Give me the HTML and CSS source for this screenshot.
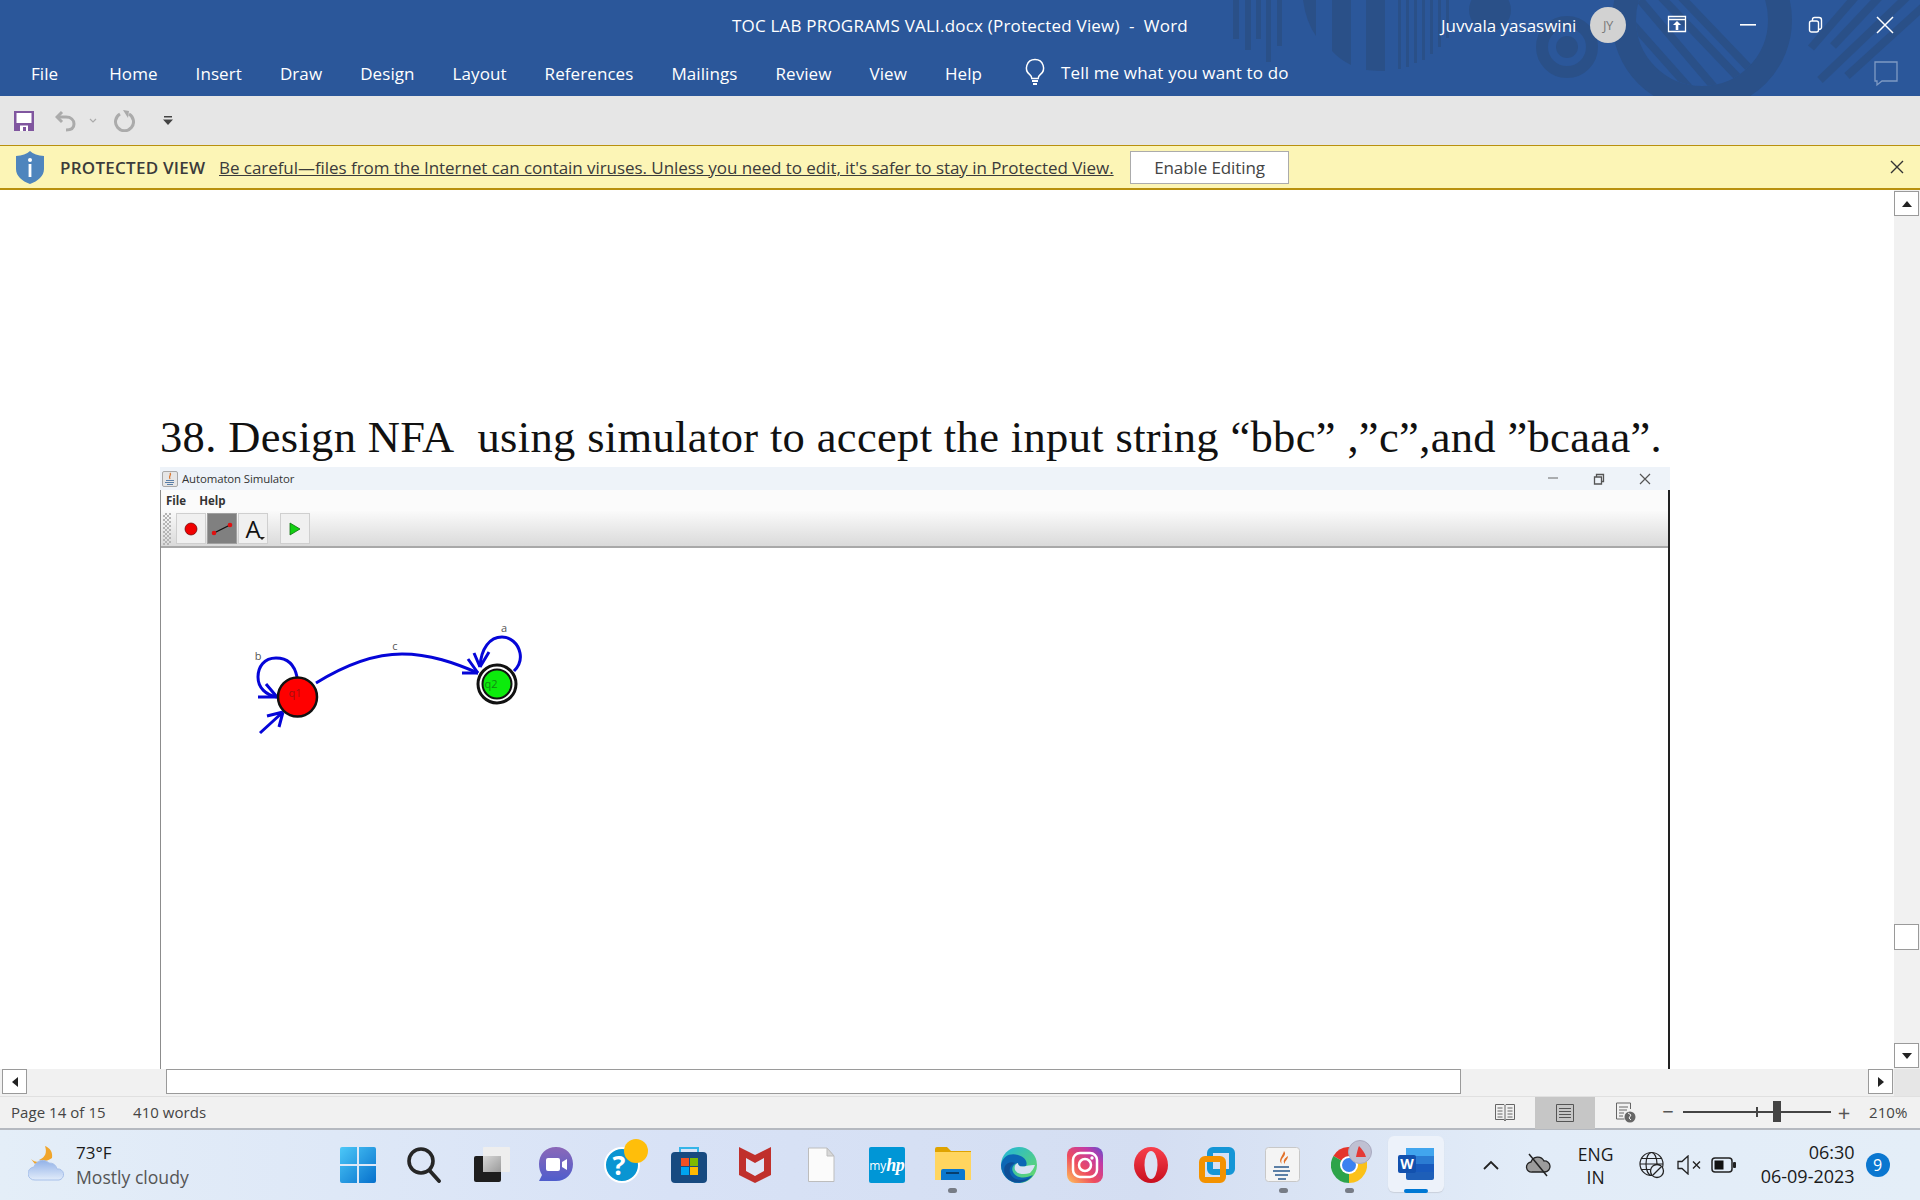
FILE: index.html
```html
<!DOCTYPE html>
<html lang="en">
<head>
<meta charset="utf-8">
<title>TOC LAB PROGRAMS VALI.docx (Protected View) - Word</title>
<link rel="stylesheet" href="styles.css">
</head>
<body>
<div class="app-window">
  <header class="ribbon">
    <svg class="ribbon-art" viewBox="0 0 1920 96" aria-hidden="true">
      <defs>
        <clipPath id="ringInner"><circle cx="1702" cy="20" r="66"/></clipPath>
      </defs>
      <g fill="#2A5088">
        <rect x="1233" y="0" width="6" height="39"/>
        <rect x="1245" y="0" width="6" height="50"/>
        <rect x="1256" y="0" width="5" height="39"/>
        <rect x="1266" y="0" width="5" height="62"/>
        <rect x="1277" y="0" width="5" height="46"/>
        <path d="M1303 0h13v36q-10-14-13-36z"/>
        <path d="M1332 0h19v65q-12-6-19-14z"/>
        <path d="M1366 0h19v71q-10 0-19-1z"/>
        <rect x="1398" y="0" width="3" height="69"/>
        <rect x="1406" y="0" width="3" height="67"/>
        <rect x="1414" y="0" width="3" height="63"/>
        <rect x="1422" y="0" width="3" height="60"/>
        <rect x="1430" y="0" width="3" height="54"/>
        <rect x="1438" y="0" width="3" height="47"/>
        <rect x="1446" y="0" width="3" height="38"/>
        <circle cx="1490" cy="10" r="21"/>
        <circle cx="1567" cy="47" r="11"/>
      </g>
      <circle cx="1567" cy="47" r="25" fill="none" stroke="#2A5088" stroke-width="12"/>
      <circle cx="1702" cy="20" r="78" fill="none" stroke="#2A5088" stroke-width="24"/>
      <g clip-path="url(#ringInner)" stroke="#2A5088" stroke-width="8">
        <line x1="1620" y1="10" x2="1700" y2="100"/>
        <line x1="1640" y1="0" x2="1725" y2="100"/>
        <line x1="1640" y1="-25" x2="1750" y2="90"/>
        <line x1="1660" y1="-25" x2="1770" y2="90"/>
      </g>
      <g stroke="#2A5088" stroke-width="8">
        <line x1="1811" y1="48" x2="1856" y2="-4"/>
        <line x1="1833" y1="46" x2="1882" y2="-6"/>
        <line x1="1820" y1="80" x2="1910" y2="-6"/>
        <line x1="1847" y1="76" x2="1924" y2="6"/>
      </g>
    </svg>
    <div class="title-row">
      <span class="doc-title">TOC LAB PROGRAMS VALI.docx (Protected View)&nbsp; -&nbsp; Word</span>
      <span class="user-name">Juvvala yasaswini</span>
      <span class="avatar">JY</span>
      <span class="win-btn win-btn-first">
        <svg width="20" height="20" viewBox="0 0 20 20"><path d="M1.500 2.500h17v15h-17zM1.500 5.500h17" fill="none" stroke="#fff" stroke-width="1.300"/><path d="M10 7l4 4h-2.700v5H8.700v-5H6z" fill="#fff"/></svg>
      </span>
      <span class="win-btn"><svg width="18" height="4" viewBox="0 0 18 4"><rect y="1" width="16" height="1.600" fill="#fff"/></svg></span>
      <span class="win-btn"><svg width="18" height="20" viewBox="0 0 18 20"><path d="M1.500 8a2 2 0 0 1 2-2h5a2 2 0 0 1 2 2v7a2 2 0 0 1-2 2h-5a2 2 0 0 1-2-2zM4.500 6V4.500a2 2 0 0 1 2-2h4.500a2.500 2.500 0 0 1 2.500 2.500v7.500a2 2 0 0 1-3 1.500" fill="none" stroke="#fff" stroke-width="1.400"/></svg></span>
      <span class="win-btn"><svg width="18" height="18" viewBox="0 0 18 18"><path d="M1 1l16 16M17 1L1 17" stroke="#fff" stroke-width="1.500"/></svg></span>
    </div>
    <nav class="tab-row">
      <span class="tab tab-file">File</span>
      <span class="tab">Home</span>
      <span class="tab">Insert</span>
      <span class="tab">Draw</span>
      <span class="tab">Design</span>
      <span class="tab">Layout</span>
      <span class="tab">References</span>
      <span class="tab">Mailings</span>
      <span class="tab">Review</span>
      <span class="tab">View</span>
      <span class="tab">Help</span>
      <span class="tell-me">
        <svg width="22" height="28" viewBox="0 0 22 28"><path d="M11 1.500a8.500 8.500 0 0 0-5 15.400c1.200 1 1.700 2.200 1.800 3.600h6.400c.1-1.400.6-2.600 1.800-3.600A8.500 8.500 0 0 0 11 1.500z" fill="none" stroke="#fff" stroke-width="1.500"/><path d="M8 23h6M9 26h4" stroke="#fff" stroke-width="1.800"/></svg>
        <span>Tell me what you want to do</span>
      </span>
      <svg class="comment-icon" width="26" height="28" viewBox="0 0 26 28"><path d="M2 3h22v19H9l-5 4v-4H2z" fill="none" stroke="#7F9AC4" stroke-width="1.300"/></svg>
    </nav>
  </header>

  <div class="quick-bar">
    <svg class="qa-save" width="20" height="20" viewBox="0 0 20 20"><path d="M0 0h20v20H0z" fill="#80569F"/><path d="M2.500 2h15v10h-15z" fill="#fff"/><path d="M6 14.500h8V20h-2v-4H9v4H6z" fill="#fff"/></svg>
    <svg class="qa-undo" width="24" height="22" viewBox="0 0 24 22"><path d="M7 2L2 7l5 5" fill="none" stroke="#ABABAB" stroke-width="3"/><path d="M3 7h8c5 0 8 3 8 7s-3 6-8 6" fill="none" stroke="#ABABAB" stroke-width="3"/></svg>
    <svg class="qa-chev" width="8" height="6" viewBox="0 0 8 6"><path d="M1 1l3 3 3-3" fill="none" stroke="#ABABAB" stroke-width="1.200"/></svg>
    <svg class="qa-redo" width="22" height="22" viewBox="0 0 22 22"><path d="M16 4a9 9 0 1 1-9 0" fill="none" stroke="#ABABAB" stroke-width="3"/><path d="M10 0l6 1-1 7z" fill="#ABABAB"/></svg>
    <svg class="qa-more" width="10" height="9" viewBox="0 0 10 9"><path d="M1 0h8v1.500H1zM0 3.500h10L5 9z" fill="#444"/></svg>
  </div>

  <div class="protected-bar">
    <svg class="shield" width="30" height="33" viewBox="0 0 30 33"><path d="M15 0c3 3 8 4.500 14 5v13c0 7-6 12-14 15C7 30 1 25 1 18V5c6-.5 11-2 14-5z" fill="#4F85BD"/><circle cx="15" cy="9" r="2" fill="#fff"/><rect x="13.600" y="13" width="2.800" height="13" fill="#fff"/></svg>
    <strong class="pv-label">PROTECTED VIEW</strong>
    <span class="pv-text">Be careful—files from the Internet can contain viruses. Unless you need to edit, it's safer to stay in Protected View.</span>
    <span class="pv-button">Enable Editing</span>
    <svg class="pv-close" width="14" height="14" viewBox="0 0 14 14"><path d="M1 1l12 12M13 1L1 13" stroke="#333" stroke-width="1.400"/></svg>
  </div>

  <main class="doc-row">
    <div class="doc">
      <h1 class="doc-heading">38. Design NFA&nbsp; using simulator to accept the input string “bbc” ,”c”,and ”bcaaa”.</h1>
      <section class="sim">
        <div class="sim-title">
          <svg width="16" height="16" viewBox="0 0 16 16"><rect x=".5" y=".5" width="15" height="15" rx="1.500" fill="#E6E6E6" stroke="#A8A8A8"/><path d="M8 2c2 2-2 3 0 6" stroke="#D9742B" stroke-width="1.300" fill="none"/><path d="M4 9.500h8M3 11.500h9M5 13.500h6" stroke="#5A7FA8" stroke-width="1.200"/></svg>
          <span class="sim-name">Automaton Simulator</span>
          <span class="sim-ctl">
            <svg width="12" height="12" viewBox="0 0 12 12"><path d="M1 5h10" stroke="#666" stroke-width="1"/></svg>
            <svg width="12" height="12" viewBox="0 0 12 12"><path d="M1.500 4h7v7h-7zM3.500 4V1.500h7v7H8.500" fill="none" stroke="#555" stroke-width="1.300"/></svg>
            <svg width="12" height="12" viewBox="0 0 12 12"><path d="M1 1l10 10M11 1L1 11" stroke="#555" stroke-width="1.200"/></svg>
          </span>
        </div>
        <div class="sim-body">
          <div class="sim-menu"><span>File</span><span>Help</span></div>
          <div class="sim-toolbar">
            <span class="grip"></span>
            <span class="tool"><svg width="14" height="14" viewBox="0 0 14 14"><circle cx="7" cy="7" r="6" fill="#F00000" stroke="#600" stroke-width=".7"/></svg></span>
            <span class="tool tool-on"><svg width="22" height="14" viewBox="0 0 22 14"><path d="M3 11L19 3" stroke="#111" stroke-width="1.300"/><circle cx="3" cy="11" r="2.300" fill="#E01010"/><circle cx="19" cy="3" r="2.300" fill="#E01010"/></svg></span>
            <span class="tool tool-a">A<svg class="tool-caret" width="6" height="3" viewBox="0 0 6 3"><path d="M0 0h6L3 3z" fill="#222"/></svg></span>
            <span class="tool tool-play"><svg width="12" height="14" viewBox="0 0 12 14"><path d="M1 1l10 6-10 6z" fill="#12D012" stroke="#107010" stroke-width=".8"/></svg></span>
          </div>
          <div class="sim-canvas">
            <svg class="diagram" viewBox="161 548 1508 520" width="1508" height="520">
              <g fill="none" stroke="#0505D8" stroke-width="3">
                <path d="M297 677C294 662 285 658 276 658C264 658 258 667 258 677C258 688 266 695 277 697"/>
                <path d="M258 697H277M266 684L277 697"/>
                <path d="M260 733L283 712M267 716L283 712M279 727L283 712"/>
                <path d="M316 683C350 662 380 654 402 654C430 654 455 663 478 673"/>
                <path d="M468 659L478 673M462 673L478 673"/>
                <path d="M514 671C520 665 521 658 520 653C518 643 510 637 502 637C490 637 481 648 480 667"/>
                <path d="M474 653L480 667M489 652L480 667"/>
              </g>
              <circle cx="297.500" cy="697" r="19.500" fill="#FF0000" stroke="#111" stroke-width="2.500"/>
              <circle cx="497" cy="684" r="19" fill="#fff" stroke="#111" stroke-width="3"/>
              <circle cx="497" cy="684" r="14.500" fill="#0CEB0C" stroke="#111" stroke-width="2"/>
              <g class="diagram-text">
                <text x="295" y="697" fill="#A01010">q1</text>
                <text x="491" y="688" fill="#128A12">q2</text>
                <text x="258" y="660">b</text>
                <text x="395" y="650">c</text>
                <text x="504" y="632">a</text>
              </g>
            </svg>
          </div>
        </div>
      </section>
    </div>
    <aside class="vscroll">
      <span class="sb-btn"><svg width="10" height="6" viewBox="0 0 10 6"><path d="M5 0l5 6H0z" fill="#222"/></svg></span>
      <span class="vthumb"></span>
      <span class="sb-btn"><svg width="10" height="6" viewBox="0 0 10 6"><path d="M0 0h10L5 6z" fill="#222"/></svg></span>
    </aside>
  </main>

  <div class="hscroll">
    <span class="sb-btn sb-h"><svg width="6" height="10" viewBox="0 0 6 10"><path d="M6 0v10L0 5z" fill="#222"/></svg></span>
    <span class="hthumb"></span>
    <span class="sb-btn sb-h"><svg width="6" height="10" viewBox="0 0 6 10"><path d="M0 0v10l6-5z" fill="#222"/></svg></span>
    <span class="corner"></span>
  </div>

  <footer class="status">
    <span class="st-page">Page 14 of 15</span>
    <span class="st-words">410 words</span>
    <span class="view-btn view-read"><svg width="20" height="20" viewBox="0 0 20 20"><path d="M.5 1.500h8.500l1 1 1-1h8.500v15H11l-1 1.500-1-1.500H.5zM10 2.500v15" fill="none" stroke="#666"/><path d="M2.500 5h5M2.500 8h5M2.500 11h5M2.500 14h5M12.500 5h5M12.500 8h5M12.500 11h5M12.500 14h5" stroke="#666"/></svg></span>
    <span class="view-btn view-on"><svg width="20" height="20" viewBox="0 0 20 20"><path d="M1.500 1.500h17v17h-17z" fill="none" stroke="#555"/><path d="M4 5.500h12M4 8.500h12M4 11.500h12M4 14.500h12" stroke="#555"/></svg></span>
    <span class="view-btn"><svg width="21" height="21" viewBox="0 0 21 21"><path d="M1.500 1h14v6M1.500 1v16h8" fill="none" stroke="#666"/><path d="M4 5h9M4 8h8M4 11h5M4 14h4" stroke="#666"/><circle cx="15" cy="15" r="5.500" fill="#666"/><path d="M13 11l3 2-2 3 2 2" stroke="#F1F1F1" fill="none"/></svg></span>
    <span class="zoom-minus">−</span>
    <span class="zoom-track"><i class="zoom-tick"></i><i class="zoom-thumb"></i></span>
    <span class="zoom-plus">+</span>
    <span class="zoom-value">210%</span>
  </footer>
</div>

<div class="taskbar">
  <div class="weather">
    <svg width="38" height="38" viewBox="0 0 38 38">
      <defs><linearGradient id="cloud" x1="0" y1="0" x2="0" y2="1"><stop offset="0" stop-color="#92B2E8"/><stop offset="1" stop-color="#E2ECFA"/></linearGradient></defs>
      <path d="M17 0c2 6 1 11-6 14 4 2 9 1 13-2 1-6-2-10-7-12z" fill="#F0A52B"/>
      <path d="M3 13c3 3 8 4 12 2l-8 3z" fill="#F0A52B"/>
      <path d="M7 34a6.500 6.500 0 0 1-1-13 9 9 0 0 1 15-4 8 8 0 0 1 8 6 5.500 5.500 0 0 1 2 11z" fill="url(#cloud)" stroke="#A7C0EA" stroke-width="1"/>
    </svg>
    <div class="weather-text"><span class="temp">73°F</span><span class="cond">Mostly cloudy</span></div>
  </div>
  <div class="apps">
    <span class="app"><svg width="36" height="36" viewBox="0 0 36 36"><defs><linearGradient id="win" x1="0" y1="0" x2="1" y2="1"><stop offset="0" stop-color="#4CC8F8"/><stop offset="1" stop-color="#0670CC"/></linearGradient></defs><path d="M0 2a2 2 0 0 1 2-2h15v17H0zM19 0h15a2 2 0 0 1 2 2v15H19zM0 19h17v17H2a2 2 0 0 1-2-2zM19 19h17v15a2 2 0 0 1-2 2H19z" fill="url(#win)"/></svg></span>
    <span class="app"><svg width="36" height="36" viewBox="0 0 36 36"><circle cx="15" cy="14" r="12" fill="none" stroke="#262626" stroke-width="3.600"/><path d="M24 24l9 10" stroke="#262626" stroke-width="3.800" stroke-linecap="round"/></svg></span>
    <span class="app app-tv"><svg width="36" height="36" viewBox="0 0 36 36"><defs><linearGradient id="tv" x1="0" y1="0" x2="1" y2="1"><stop offset="0" stop-color="#D8D8D8"/><stop offset="1" stop-color="#9A9A9A"/></linearGradient></defs><rect x="0" y="9" width="27" height="26" rx="2" fill="#1E1E1E"/><rect x="9" y="0" width="27" height="25" rx="1" fill="#EEEEEE"/><rect x="9" y="9" width="18" height="16" fill="url(#tv)"/></svg></span>
    <span class="app"><svg width="36" height="36" viewBox="0 0 36 36"><defs><linearGradient id="chat" x1="0" y1="0" x2="0" y2="1"><stop offset="0" stop-color="#8B68B8"/><stop offset="1" stop-color="#4F5DCC"/></linearGradient></defs><path d="M18 0c10 0 17 7 17 17s-7 17-17 17H1l3-6C2 25 1 21 1 17 1 7 8 0 18 0z" fill="url(#chat)"/><rect x="8" y="11" width="14" height="13" rx="2" fill="#fff"/><path d="M24 15l5-3v11l-5-3z" fill="#fff"/></svg></span>
    <span class="app help-app"><svg width="36" height="36" viewBox="0 0 36 36"><circle cx="18" cy="18" r="17" fill="#0A95D2" stroke="#fff" stroke-width="2"/><text x="15" y="28" class="help-mark">?</text></svg><i class="help-dot"></i></span>
    <span class="app"><svg width="36" height="36" viewBox="0 0 36 36"><path d="M9 5V1h18v4" fill="none" stroke="#35B5E8" stroke-width="2"/><rect y="5" width="36" height="31" rx="4" fill="#174A80"/><rect x="10" y="11" width="8" height="8" fill="#F25022"/><rect x="19" y="11" width="8" height="8" fill="#7FBA00"/><rect x="10" y="20" width="8" height="8" fill="#00A4EF"/><rect x="19" y="20" width="8" height="8" fill="#FFB900"/></svg></span>
    <span class="app"><svg width="36" height="36" viewBox="0 0 36 36"><path d="M2 0l16 8 16-8v28l-16 8-16-8z" fill="#C0302C"/><path d="M9 11l9 5 9-5v13l-9 5-9-5z" fill="#DFE6F6"/></svg></span>
    <span class="app"><svg width="36" height="36" viewBox="0 0 36 36"><path d="M5.500 1H24l7 8v25.500H5.500z" fill="#FBFBFB" stroke="#BDBDBD"/><path d="M24 1v8h7z" fill="#D8D8D8" stroke="#BDBDBD"/></svg></span>
    <span class="app"><span class="hp-tile"><span class="hp-my">my</span><span class="hp-hp">hp</span></span></span>
    <span class="app app-open"><svg width="36" height="36" viewBox="0 0 36 36"><path d="M0 2a2 2 0 0 1 2-2h10l4 4h20v8H0z" fill="#DFA300"/><path d="M0 5h36v28H0z" fill="#FFD55F"/><path d="M6 33V24a2 2 0 0 1 2-2h20a2 2 0 0 1 2 2v9z" fill="#0A78CF"/><rect x="11" y="25" width="13" height="2" fill="#063E6E"/></svg></span>
    <span class="app"><svg width="36" height="36" viewBox="0 0 36 36"><defs><linearGradient id="edgeA" x1="0" y1="0" x2="1" y2="1"><stop offset="0" stop-color="#1FB5DE"/><stop offset="1" stop-color="#6BDB5F"/></linearGradient></defs><circle cx="18" cy="18" r="18" fill="url(#edgeA)"/><path d="M0 18C2 8 10 6 17 8c7 2 10 7 8 11-3 1-8 1-8-3-5 1-7 5-5 9 3 6 12 7 20 3-4 6-10 8-15 8C8 36 0 28 0 18z" fill="#0C67B5"/><path d="M14 16c-5 2-7 7-4 12 3 5 11 7 20 2-5 5-12 6-17 5C6 33 1 26 4 19c2-3 6-5 10-3z" fill="#0E4F96"/><path d="M17 16c0 4 5 4 8 3 4-1 6-1 9-1-1 3-3 6-5 8-6 2-13 1-15-3-1-3 0-6 3-7z" fill="#D9E2F4"/></svg></span>
    <span class="app"><svg width="36" height="36" viewBox="0 0 36 36"><defs><linearGradient id="ig" x1="0" y1="1" x2="1" y2="0"><stop offset="0" stop-color="#FFC55A"/><stop offset=".4" stop-color="#EE4C5E"/><stop offset=".75" stop-color="#C23AA6"/><stop offset="1" stop-color="#5B52D0"/></linearGradient></defs><rect width="36" height="36" rx="8" fill="url(#ig)"/><rect x="6" y="6" width="24" height="24" rx="7" fill="none" stroke="#fff" stroke-width="2.500"/><circle cx="18" cy="18" r="6" fill="none" stroke="#fff" stroke-width="2.500"/><circle cx="25" cy="11" r="1.700" fill="#fff"/></svg></span>
    <span class="app"><svg width="36" height="36" viewBox="0 0 36 36"><defs><linearGradient id="op" x1="0" y1="0" x2="0" y2="1"><stop offset="0" stop-color="#F8404C"/><stop offset="1" stop-color="#C80F1E"/></linearGradient></defs><ellipse cx="18" cy="18" rx="17" ry="18" fill="url(#op)"/><ellipse cx="18" cy="18" rx="6.500" ry="14" fill="#D9E2F4"/></svg></span>
    <span class="app"><svg width="36" height="36" viewBox="0 0 36 36"><rect x="11" y="3" width="22" height="22" rx="3" fill="none" stroke="#1596D6" stroke-width="6"/><rect x="3" y="12" width="21" height="21" rx="3" fill="none" stroke="#F39200" stroke-width="6"/></svg></span>
    <span class="app app-open"><svg width="36" height="36" viewBox="0 0 36 36"><rect x=".5" y=".5" width="34" height="34" rx="3" fill="#F4F4F4" stroke="#C8C8C8"/><path d="M19 4c4 5-5 7-2 13 -5-4 1-8 2-13z" fill="#E2712A"/><path d="M23 9c0 4-4 5-3 8-3-3 0-6 3-8z" fill="#E2712A"/><path d="M9 20h15M8 24h17M10 28h13M13 32h8" stroke="#5B7FA6" stroke-width="1.800"/></svg></span>
    <span class="app app-open chrome-app"><svg width="36" height="36" viewBox="0 0 36 36"><path d="M18 18L33.600 9A18 18 0 0 0 2.400 9z" fill="#E5352B"/><path d="M18 18L2.400 9A18 18 0 0 0 18 36z" fill="#2DA44A"/><path d="M18 18V36A18 18 0 0 0 33.600 9z" fill="#FBC119"/><circle cx="18" cy="18" r="9" fill="#fff"/><circle cx="18" cy="18" r="7" fill="#3B82F0"/></svg><i class="chrome-badge"><svg width="14" height="14" viewBox="0 0 14 14"><path d="M3 12C4 7 5 3 6 1c3 3 6 7 7 11z" fill="#E53935"/></svg></i></span>
    <span class="app app-active"><svg width="36" height="36" viewBox="0 0 36 36"><rect x="8" y="1" width="28" height="32" rx="2" fill="#1E5FB8"/><rect x="8" y="1" width="28" height="8" fill="#41A5EE"/><rect x="8" y="9" width="28" height="8" fill="#2B7CD3"/><rect x="8" y="17" width="28" height="8" fill="#185ABD"/><rect x="0" y="8" width="18" height="18" rx="2" fill="#1251AE"/><text x="9" y="22" class="word-mark">W</text></svg></span>
  </div>
  <div class="tray">
    <span class="tray-item tray-chev"><svg width="16" height="10" viewBox="0 0 16 10"><path d="M1 9l7-7 7 7" fill="none" stroke="#222" stroke-width="1.800"/></svg></span>
    <span class="tray-item tray-cloud"><svg width="26" height="24" viewBox="0 0 26 24"><path d="M7 19a5 5 0 0 1-1-10 7 7 0 0 1 13-1 5.500 5.500 0 0 1 1 11z" fill="#9C9C9C" stroke="#222" stroke-width="1.300"/><path d="M4 1l18 22" stroke="#222" stroke-width="1.500"/></svg></span>
    <span class="tray-lang"><span>ENG</span><span>IN</span></span>
    <span class="tray-item tray-globe"><svg width="26" height="28" viewBox="0 0 26 28"><g fill="none" stroke="#222" stroke-width="1.200"><circle cx="12.500" cy="13" r="11.500"/><ellipse cx="12.500" cy="13" rx="5.500" ry="11.500"/><path d="M1 13h23M2.500 7.500h20M2.500 18.500h12"/></g><circle cx="18" cy="20" r="6.500" fill="#E3EDF8" stroke="#222" stroke-width="1.300"/><path d="M14 24l8-8" stroke="#222" stroke-width="1.300"/></svg></span>
    <span class="tray-item tray-vol"><svg width="25" height="20" viewBox="0 0 25 20"><path d="M1 6.500h4L11 1v18l-6-5.500H1z" fill="none" stroke="#222" stroke-width="1.300"/><path d="M16 6.500l7 7M23 6.500l-7 7" stroke="#222" stroke-width="1.400"/></svg></span>
    <span class="tray-item tray-bat"><svg width="25" height="18" viewBox="0 0 25 18"><rect x="1" y="2" width="20" height="14" rx="3" fill="none" stroke="#222" stroke-width="1.500"/><rect x="3.500" y="4.500" width="9" height="9" fill="#111"/><rect x="22" y="6" width="3" height="6" rx="1" fill="#222"/></svg></span>
    <span class="clock"><span>06:30</span><span>06-09-2023</span></span>
    <span class="notif">9</span>
  </div>
</div>
</body>
</html>
```
FILE: styles.css
```css
* { box-sizing: border-box; }
html, body { margin: 0; padding: 0; }
body {
  width: 1920px;
  height: 1200px;
  overflow: hidden;
  font-family: "Open Sans", "Noto Sans", sans-serif;
  background: #fff;
  color: #333;
}
svg { display: block; flex: none; }

.app-window { height: 1130px; display: flex; flex-direction: column; }

/* Ribbon */
.ribbon { position: relative; height: 96px; flex: none; background: #2B579A; color: #fff; overflow: hidden; }
.ribbon-art { position: absolute; left: 0; top: 0; width: 1920px; height: 96px; }
.title-row { position: relative; height: 50px; display: flex; align-items: center; }
.doc-title { margin-left: 732px; width: 709px; font-size: 17px; letter-spacing: .2px; white-space: nowrap; }
.user-name { width: 149px; font-size: 17px; letter-spacing: 0; white-space: nowrap; }
.avatar {
  width: 36px; height: 36px; border-radius: 50%; background: #D2D2D2; color: #7A7A7A;
  display: flex; align-items: center; justify-content: center; font-size: 13px; letter-spacing: -.3px;
}
.win-btn { width: 68px; height: 30px; display: flex; align-items: center; justify-content: center; }
.win-btn-first { margin-left: 17px; width: 72px; margin-top: -2px; padding-right: 4px; }
.tab-row { position: relative; height: 46px; display: flex; align-items: center; font-size: 17px; letter-spacing: .08px; padding: 0 0 0 31px; }
.tab { margin-right: 38px; white-space: nowrap; }
.tab-file { margin-right: 51px; }
.tell-me { display: flex; align-items: center; gap: 15px; margin-left: 4px; margin-top: -2px; letter-spacing: .15px; white-space: nowrap; }
.comment-icon { margin-left: auto; margin-right: 21px; }

/* Quick access */
.quick-bar { height: 49px; flex: none; background: #E6E6E6; display: flex; align-items: center; padding-left: 14px; }
.qa-undo { margin-left: 21px; }
.qa-chev { margin-left: 10px; }
.qa-redo { margin-left: 16px; }
.qa-more { margin-left: 28px; }

/* Protected view */
.protected-bar {
  height: 45px; flex: none; background: #FCF5B6; border-top: 1px solid #B8900F; border-bottom: 2px solid #B8900F;
  display: flex; align-items: center; padding-left: 15px; color: #3B3B3B; font-size: 17px;
}
.pv-label { margin-left: 15px; font-weight: 600; white-space: nowrap; width: 159px; letter-spacing: .25px; }
.pv-text { text-decoration: underline; white-space: nowrap; width: 911px; letter-spacing: -.05px; }
.pv-button {
  width: 159px; height: 33px; background: #fff; border: 1px solid #ABABAB; display: flex; align-items: center; justify-content: center;
  margin-top: 1px; font-size: 17px; letter-spacing: -.1px; color: #444;
}
.pv-close { margin-left: auto; margin-right: 16px; }

/* Document */
.doc-row { flex: 1; min-height: 0; display: flex; }
.doc { flex: 1; min-width: 0; background: #fff; padding: 0 0 0 160px; overflow: hidden; }
.doc-heading {
  margin: 0; height: 277px; padding-top: 222px; font-family: "Liberation Serif", serif; font-weight: 400; font-size: 44.500px; line-height: 50px;
  color: #111; white-space: pre; letter-spacing: .35px;
}
.sim { width: 1510px; }
.sim-title {
  height: 23px; background: #EEF3F9; display: flex; align-items: center; padding-left: 2px; gap: 4px;
  font-size: 11.400px; color: #333; letter-spacing: -.1px;
}
.sim-name { flex: 1; }
.sim-ctl { display: flex; width: 123px; gap: 34px; }
.sim-body { border-left: 1px solid #8C8C8C; border-right: 2px solid #222; }
.sim-menu { height: 21px; display: flex; gap: 13px; padding-left: 5px; align-items: center; background: #FBFBFB; font-size: 11.500px; font-weight: 700; color: #333; }
.sim-toolbar {
  height: 37px; padding: 2px 0 0 2px; display: flex; align-items: flex-start; gap: 1px;
  background: linear-gradient(#FAFAFA, #DADADA); border-bottom: 2px solid #A8A8A8;
}
.grip {
  width: 8px; height: 32px; margin-right: 4px;
  background-image: conic-gradient(#B4B4B4 25%, transparent 0 50%, #B4B4B4 0 75%, transparent 0); background-size: 4px 4px;
}
.tool {
  position: relative; width: 30px; height: 31px; background: #F0F0F0; border: 1px solid #CFCFCF; display: flex; align-items: center; justify-content: center;
}
.tool-on { background: #808080; border-color: #A0A0A0; }
.tool-a { font-size: 24px; line-height: 1; color: #111; }
.tool-caret { position: absolute; right: 2px; bottom: 3px; }
.tool-play { margin-left: 11px; }
.sim-canvas { height: 600px; background: #fff; }
.diagram-text { font-family: "Open Sans", sans-serif; font-size: 11px; fill: #555; text-anchor: middle; }

/* Scrollbars */
.sb-btn { width: 25px; height: 25px; flex: none; background: #fff; border: 1px solid #9A9A9A; display: flex; align-items: center; justify-content: center; }
.vscroll { width: 26px; flex: none; background: #F1F1F1; padding-top: 1px; display: flex; flex-direction: column; align-items: flex-start; }
.vthumb { width: 25px; height: 26px; background: #fff; border: 1px solid #9A9A9A; margin-top: 708px; margin-bottom: 93px; }
.hscroll { height: 27px; flex: none; background: #F1F1F1; display: flex; padding-left: 2px; }
.hthumb { width: 1295px; height: 25px; margin-left: 139px; background: #fff; border: 1px solid #9A9A9A; }
.sb-h { margin-left: 407px; }
.hscroll .sb-h:first-child { margin-left: 0; }
.corner { width: 26px; height: 27px; margin-left: 1px; background: #E6E6E6; }

/* Status bar */
.status { height: 34px; flex: none; background: #F1F1F1; display: flex; align-items: center; font-size: 15px; letter-spacing: .05px; color: #444; padding-bottom: 2px; border-top: 1px solid #E0E0E0; border-bottom: 2px solid #B5B9C0; }
.st-page { margin-left: 11px; width: 122px; }
.st-words { width: 1342px; }
.view-btn { width: 60px; height: 32px; display: flex; align-items: center; justify-content: center; margin-bottom: -2px; }
.view-on { background: #C6C6C6; }
.zoom-minus { margin-left: 5px; width: 16px; font-size: 20px; color: #555; text-align: center; }
.zoom-track { position: relative; margin-left: 7px; width: 148px; height: 2px; background: #444; }
.zoom-tick { position: absolute; left: 73px; top: -4px; width: 2px; height: 10px; background: #444; }
.zoom-thumb { position: absolute; left: 90px; top: -10px; width: 8px; height: 21px; background: #444; }
.zoom-plus { margin-left: 5px; width: 16px; font-size: 22px; color: #555; text-align: center; }
.zoom-value { margin-left: 17px; font-size: 15px; white-space: nowrap; }

/* Taskbar */
.taskbar { height: 70px; display: flex; align-items: center; background: linear-gradient(90deg, #E4EEF8 0%, #D8E2F6 35%, #D4DEF2 60%, #E2ECF8 80%, #E4EEF8 100%); color: #1A1A1A; }
.weather { width: 325px; flex: none; display: flex; align-items: center; padding-left: 28px; gap: 10px; }
.weather-text { display: flex; flex-direction: column; font-size: 17.600px; line-height: 24px; }
.temp { color: #1A1A1A; font-size: 17px; }
.cond { color: #555; }
.apps { display: flex; height: 70px; }
.app { position: relative; width: 66.100px; height: 70px; display: flex; align-items: center; justify-content: center; }
.app-tv svg { margin-left: 4px; }
.app-open::after, .app-active::after { content: ""; position: absolute; left: 50%; bottom: 7px; width: 9px; height: 5px; margin-left: -4.500px; border-radius: 3px; background: #777C86; }
.app-active::before { content: ""; position: absolute; left: 5px; right: 5px; top: 6px; bottom: 8px; border-radius: 6px; background: #EDF2FA; box-shadow: 0 1px 1px #C9D0DC; }
.app-active svg { position: relative; }
.app-active::after { width: 24px; height: 4px; margin-left: -12px; bottom: 7px; background: #0078D4; }
.help-dot { position: absolute; left: 35px; top: 9px; width: 24px; height: 24px; border-radius: 50%; background: #FFBE0A; }
.help-mark { font-family: "Open Sans", sans-serif; font-weight: 700; font-size: 27px; fill: #fff; text-anchor: middle; }
.word-mark { font-family: "Open Sans", sans-serif; font-weight: 700; font-size: 14px; fill: #fff; text-anchor: middle; }
.hp-tile { width: 36px; height: 36px; border-radius: 2px; background: #0096D6; color: #fff; display: flex; align-items: center; justify-content: center; font-style: italic; }
.hp-my { font-size: 12px; font-style: normal; }
.hp-hp { font-size: 18px; font-weight: 700; letter-spacing: -.5px; font-family: "Liberation Serif", serif; }
.chrome-badge { position: absolute; left: 32px; top: 10px; width: 24px; height: 24px; border-radius: 50%; background: #BFC0D2; border: 1px solid #A9AAC0; display: flex; align-items: center; justify-content: center; }
.tray { flex: 1; display: flex; align-items: center; padding-left: 22px; }
.tray-item { display: flex; align-items: center; justify-content: center; }
.tray-chev { width: 40px; margin-right: 12px; }
.tray-cloud { width: 30px; }
.tray-lang { width: 60px; margin-left: 13px; display: flex; flex-direction: column; align-items: center; font-size: 17.500px; line-height: 23px; margin-top: 2px; }
.tray-globe { width: 30px; margin-left: 11px; }
.tray-vol { width: 30px; margin-left: 8px; }
.tray-bat { width: 30px; margin-left: 4px; }
.clock { width: 116px; display: flex; flex-direction: column; align-items: flex-end; font-size: 18px; line-height: 24px; margin-top: -3px; }
.notif { margin-left: 11px; width: 24px; height: 24px; border-radius: 50%; background: #0B77D0; color: #fff; font-size: 16px; display: flex; align-items: center; justify-content: center; }
```
